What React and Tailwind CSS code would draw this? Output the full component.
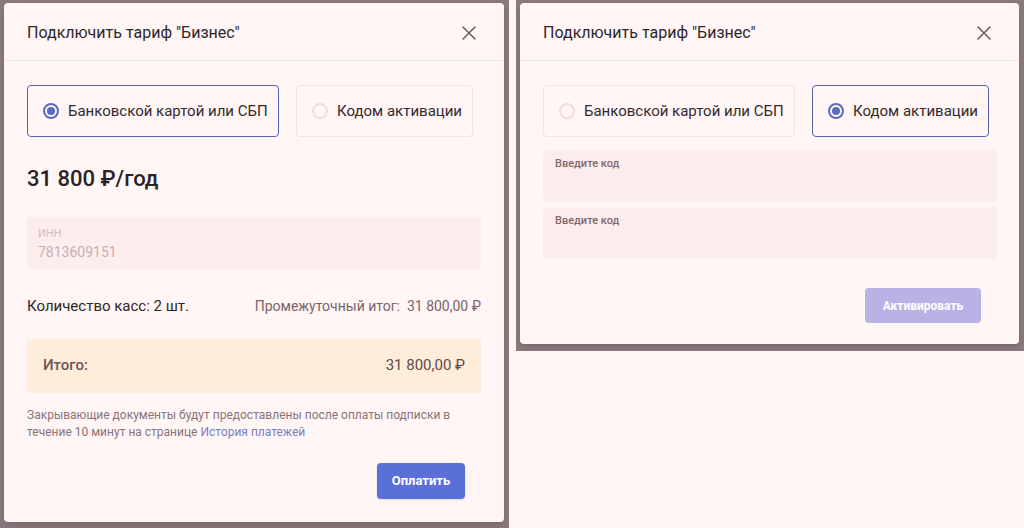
import React from 'react';

const font = { fontFamily: 'Roboto, "Noto Sans", sans-serif' };

function CloseIcon() {
  return (
    <svg width="16" height="16" viewBox="0 0 16 16" className="text-[#6e5d61]">
      <path d="M2 2 L14 14 M14 2 L2 14" stroke="currentColor" strokeWidth="1.6" strokeLinecap="round" />
    </svg>
  );
}

function Radio({ checked }) {
  return (
    <span
      className={
        'flex h-[16px] w-[16px] shrink-0 items-center justify-center rounded-full border-2 ' +
        (checked ? 'border-[#5c6bc0]' : 'border-[#f1dcdc]')
      }
    >
      {checked && <span className="h-[8px] w-[8px] rounded-full bg-[#5c6bc0]" />}
    </span>
  );
}

function Option({ label, checked, width }) {
  return (
    <div
      className={
        'flex h-[52px] items-center gap-[9px] rounded-[4px] border pl-[15px] text-[15px] text-[#332a2d] ' +
        (checked ? 'border-[#5a62b0]' : 'border-[#f6e2e2]') +
        ' ' +
        width
      }
    >
      <Radio checked={checked} />
      <span>{label}</span>
    </div>
  );
}

function Header() {
  return (
    <div className="flex h-[58px] shrink-0 items-center justify-between border-b border-[#f6e6e6] pl-[23px] pr-[27px] pt-[2px]">
      <span className="text-[16px] text-[#2e2629]">Подключить тариф "Бизнес"</span>
      <CloseIcon />
    </div>
  );
}

function Methods({ card }) {
  return (
    <div className="flex gap-[17px]">
      <Option label="Банковской картой или СБП" checked={card} width="w-[252px]" />
      <Option label="Кодом активации" checked={!card} width="w-[177px]" />
    </div>
  );
}

function PayModal() {
  return (
    <div className="flex h-[519px] w-[500px] flex-col rounded-[4px] bg-[#fff6f5] shadow-md">
      <Header />
      <div className="flex flex-col px-[23px] pt-[24px]">
        <Methods card />
        <div className="mt-[28px] text-[22px] font-medium leading-[28px] text-[#2a2226]">31 800 ₽/год</div>
        <div className="mt-[24px] flex h-[52px] w-[454px] flex-col justify-center rounded-[3px] bg-[#fdeded] px-[11px]">
          <span className="text-[11px] leading-[14px] text-[#d8b9bd]">ИНН</span>
          <span className="mt-[3px] text-[14px] leading-[16px] text-[#c9adb1]">7813609151</span>
        </div>
        <div className="mt-[26px] flex w-[454px] items-center justify-between">
          <span className="text-[15px] text-[#2e2629]">Количество касс: 2 шт.</span>
          <span className="text-[14px] text-[#7a6468]">Промежуточный итог:&nbsp; 31 800,00 ₽</span>
        </div>
        <div className="mt-[21px] flex h-[54px] w-[454px] items-center justify-between rounded-[2px] bg-[#ffecd9] px-[16px]">
          <span className="text-[15px] font-medium text-[#6b5559]">Итого:</span>
          <span className="text-[15px] text-[#5f4b4f]">31 800,00 ₽</span>
        </div>
        <p className="mt-[14px] w-[460px] text-[12px] leading-[17px] text-[#8a7377]">
          Закрывающие документы будут предоставлены после оплаты подписки в течение 10 минут на странице{' '}
          <span className="text-[#7b7fc4]">История платежей</span>
        </p>
        <div className="mt-[22px] flex w-[438px] justify-end">
          <button className="h-[36px] w-[88px] rounded-[4px] bg-[#5a6fd8] text-[13px] font-bold text-white shadow-sm">
            Оплатить
          </button>
        </div>
      </div>
    </div>
  );
}

function CodeField() {
  return (
    <div className="h-[52px] w-[454px] rounded-[3px] bg-[#fdeced] px-[12px] pt-[7px]">
      <span className="block text-[11px] font-medium leading-[14px] text-[#7f686c]">Введите код</span>
    </div>
  );
}

function CodeModal() {
  return (
    <div className="flex h-[341px] w-[499px] flex-col rounded-[4px] bg-[#fff6f5] shadow-md">
      <Header />
      <div className="flex flex-col px-[23px] pt-[24px]">
        <Methods card={false} />
        <div className="mt-[13px] flex flex-col gap-[5px]">
          <CodeField />
          <CodeField />
        </div>
        <div className="mt-[29px] flex w-[438px] justify-end">
          <button className="h-[35px] w-[116px] rounded-[4px] bg-[#b9b2e4] text-[12px] font-bold text-white">
            Активировать
          </button>
        </div>
      </div>
    </div>
  );
}

export default function App() {
  return (
    <div className="flex h-[528px] w-[1024px] items-start overflow-hidden bg-[#fff6f5]" style={font}>
      <div className="h-[528px] w-[509px] shrink-0 bg-[#8b787c] pl-[4px] pt-[3px]">
        <PayModal />
      </div>
      <div className="ml-[7px] h-[351px] w-[508px] shrink-0 bg-[#8b787c] pl-[4px] pt-[3px]">
        <CodeModal />
      </div>
    </div>
  );
}
